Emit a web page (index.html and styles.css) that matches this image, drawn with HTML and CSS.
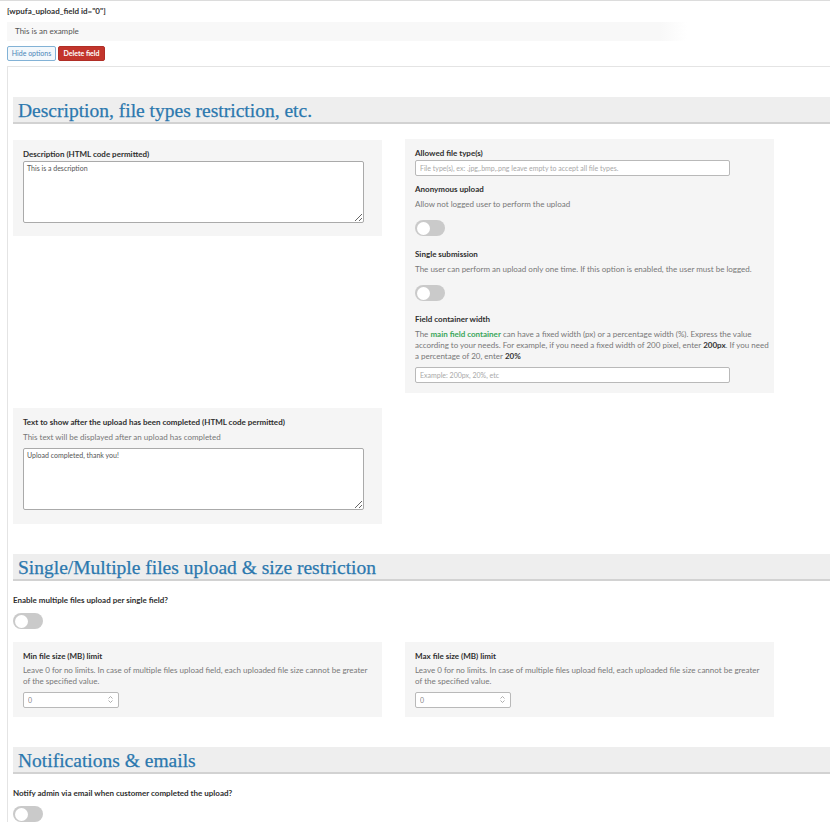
FILE: index.html
```html
<!DOCTYPE html>
<html>
<head>
<meta charset="utf-8">
<link rel="stylesheet" href="styles.css">
</head>
<body>
<div class="topline"></div>
<div class="page">
  <div class="shortcode">[wpufa_upload_field id="0"]</div>
  <div class="preview">This is an example</div>
  <div class="actions">
    <button class="btn btn-hide">Hide options</button>
    <button class="btn btn-delete">Delete field</button>
  </div>
  <div class="options">
    <section class="section">
      <h2 class="section-title">Description, file types restriction, etc.</h2>
      <div class="grid">
        <div class="card card-first">
          <p class="label tight">Description (HTML code permitted)</p>
          <textarea class="textarea">This is a description</textarea>
        </div>
        <div class="card card-tall">
          <p class="label tight">Allowed file type(s)</p>
          <input class="input wide gap" type="text" placeholder="File type(s), ex: .jpg,.bmp,.png leave empty to accept all file types.">
          <p class="label">Anonymous upload</p>
          <p class="desc spaced">Allow not logged user to perform the upload</p>
          <div class="toggle gap"><span class="knob"></span></div>
          <p class="label">Single submission</p>
          <p class="desc spaced">The user can perform an upload only one time. If this option is enabled, the user must be logged.</p>
          <div class="toggle gap"><span class="knob"></span></div>
          <p class="label">Field container width</p>
          <p class="desc">The <b class="green">main field container</b> can have a fixed width (px) or a percentage width (%). Express the value according to your needs. For example, if you need a fixed width of 200 pixel, enter <b class="dark">200px</b>. If you need a percentage of 20, enter <b class="dark">20%</b></p>
          <input class="input wide" type="text" placeholder="Example: 200px, 20%, etc">
        </div>
        <div class="card">
          <p class="label">Text to show after the upload has been completed (HTML code permitted)</p>
          <p class="desc">This text will be displayed after an upload has completed</p>
          <textarea class="textarea">Upload completed, thank you!</textarea>
        </div>
      </div>
    </section>

    <section class="section">
      <h2 class="section-title">Single/Multiple files upload &amp; size restriction</h2>
      <p class="label plain">Enable multiple files upload per single field?</p>
      <div class="toggle"><span class="knob"></span></div>
      <div class="grid after-toggle">
        <div class="card card-size">
          <p class="label small-gap">Min file size (MB) limit</p>
          <p class="desc">Leave 0 for no limits. In case of multiple files upload field, each uploaded file size cannot be greater of the specified value.</p>
          <div class="num">
            <input class="input num-input" type="text" value="0">
            <svg class="spin" width="7" height="9" viewBox="0 0 7 9"><path d="M1.5 3.5 L3.5 1.5 L5.5 3.5 M1.5 5.5 L3.5 7.5 L5.5 5.5" fill="none" stroke="#999" stroke-width="0.8"/></svg>
          </div>
        </div>
        <div class="card card-size">
          <p class="label small-gap">Max file size (MB) limit</p>
          <p class="desc">Leave 0 for no limits. In case of multiple files upload field, each uploaded file size cannot be greater of the specified value.</p>
          <div class="num">
            <input class="input num-input" type="text" value="0">
            <svg class="spin" width="7" height="9" viewBox="0 0 7 9"><path d="M1.5 3.5 L3.5 1.5 L5.5 3.5 M1.5 5.5 L3.5 7.5 L5.5 5.5" fill="none" stroke="#999" stroke-width="0.8"/></svg>
          </div>
        </div>
      </div>
    </section>

    <section class="section">
      <h2 class="section-title">Notifications &amp; emails</h2>
      <p class="label plain">Notify admin via email when customer completed the upload?</p>
      <div class="toggle"><span class="knob"></span></div>
    </section>
  </div>
</div>
</body>
</html>
```
FILE: styles.css
```css
html, body {
  margin: 0;
  padding: 0;
  overflow: hidden;
  background: #fff;
}
body {
  font-family: Lato, "Noto Sans", sans-serif;
  font-size: 8px;
  color: #444;
}
.topline {
  height: 1px;
  background: #dcdcdc;
}
.page {
  padding: 5px 0 0 7px;
}
.shortcode {
  font-weight: 700;
  font-size: 8px;
  line-height: 11px;
  color: #333;
}
.preview {
  margin-top: 5px;
  width: 680px;
  height: 19px;
  line-height: 19px;
  padding-left: 8px;
  box-sizing: border-box;
  color: #555;
  background: linear-gradient(to right, #f8f8f8 0, #f8f8f8 96%, rgba(248,248,248,0) 100%);
}
.actions {
  display: flex;
  gap: 2px;
  margin-top: 5px;
}
.btn {
  height: 15px;
  padding: 0;
  font-family: Lato, "Noto Sans", sans-serif;
  font-size: 7px;
  line-height: 13px;
  white-space: nowrap;
  text-align: center;
  border-radius: 2px;
  cursor: pointer;
}
.btn-hide {
  width: 49px;
  background: #f3f8fc;
  color: #4a86b8;
  border: 1px solid #82b2d6;
}
.btn-delete {
  width: 47px;
  background: #c2352c;
  color: #fff;
  font-weight: 700;
  border: 1px solid #b02e26;
}
.options {
  margin-top: 5px;
  border-top: 1px solid #e4e4e4;
  border-left: 1px solid #e4e4e4;
  padding-left: 5px;
  width: 1000px;
}
.section {
  margin-top: 30px;
}
.section-title {
  margin: 0;
  height: 25px;
  line-height: 27px;
  padding-left: 5px;
  background: #eeeeee;
  border-bottom: 2px solid #d2d2d2;
  font-family: "Liberation Serif", serif;
  font-weight: 400;
  font-size: 19.5px;
  color: #2b78ae;
  -webkit-text-stroke: 0.25px #2b78ae;
}
.grid {
  display: grid;
  grid-template-columns: 369px 369px;
  column-gap: 23px;
  row-gap: 15px;
  align-items: start;
  margin-top: 16px;
}
.grid.after-toggle {
  margin-top: 13px;
}
.card {
  background: #f5f5f5;
  padding: 9px 10px 10px;
}
.card-first {
  padding-bottom: 9px;
}
.card-tall {
  margin-top: -1px;
  padding-right: 1px;
  padding-bottom: 10px;
}
.card-size {
  padding-top: 9px;
  padding-bottom: 9px;
}
.label {
  margin: 0 0 4px;
  font-weight: 700;
  font-size: 8px;
  line-height: 11px;
  color: #2f2f2f;
}
.label.tight {
  margin-bottom: 1px;
}
.label.small-gap {
  margin-bottom: 3px;
}
.label.plain {
  margin-top: 14px;
  margin-bottom: 7px;
}
.desc {
  margin: 0 0 5px;
  font-size: 8px;
  line-height: 11px;
  color: #777;
}
.desc.spaced {
  margin-bottom: 10px;
}
.green {
  color: #3aa65a;
}
.dark {
  color: #333;
}
.input {
  display: block;
  box-sizing: border-box;
  height: 16px;
  padding: 0 4px;
  border: 1px solid #b9b9b9;
  border-radius: 2px;
  background: #fff;
  font-family: Lato, "Noto Sans", sans-serif;
  font-size: 7px;
  color: #666;
}
.input::placeholder {
  color: #a8a8a8;
}
.input.wide {
  width: 315px;
}
.input.gap {
  margin-bottom: 8px;
}
.textarea {
  display: block;
  box-sizing: border-box;
  width: 341px;
  height: 62px;
  padding: 2px 3px;
  margin-bottom: 4px;
  border: 1px solid #aaa;
  border-radius: 2px;
  background: #fff;
  font-family: Lato, "Noto Sans", sans-serif;
  font-size: 7px;
  color: #555;
  resize: vertical;
}
.toggle {
  position: relative;
  width: 30px;
  height: 16px;
  border-radius: 8px;
  background: #cacaca;
}
.toggle.gap {
  margin-bottom: 13px;
}
.knob {
  position: absolute;
  left: 2px;
  top: 1.5px;
  width: 13px;
  height: 13px;
  border-radius: 50%;
  background: #fff;
}
.num {
  position: relative;
  width: 96px;
}
.num-input {
  width: 96px;
  height: 16px;
  color: #888;
}
.spin {
  position: absolute;
  right: 5px;
  top: 3px;
}
```
